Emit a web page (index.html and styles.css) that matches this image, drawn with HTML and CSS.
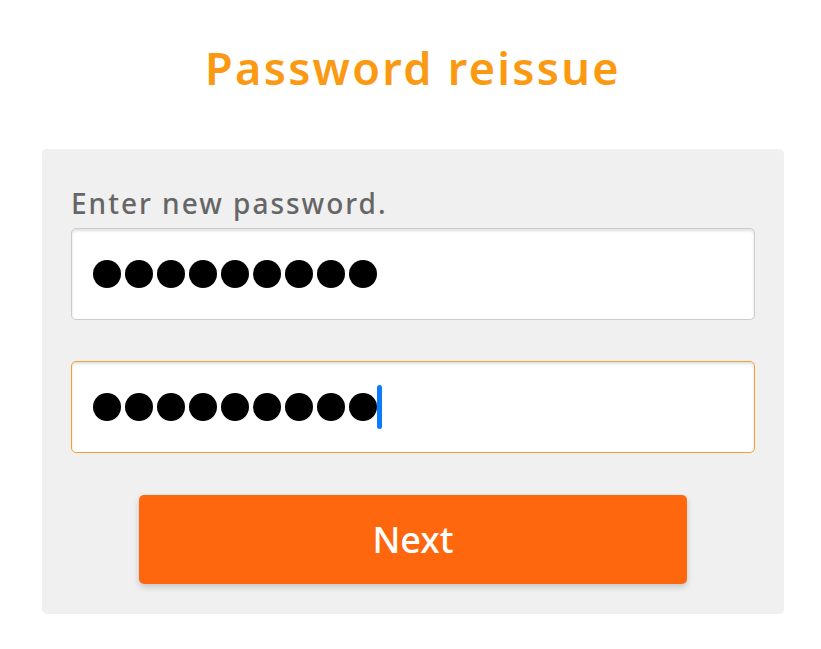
FILE: index.html
```html
<!DOCTYPE html>
<html>
<head>
<meta charset="utf-8">
<link rel="stylesheet" href="styles.css">
</head>
<body>
<h1 class="title">Password reissue</h1>
<div class="panel">
  <div class="label">Enter new password.</div>
  <div class="field">
    <div class="dots" aria-label="password"><span class="dot"></span><span class="dot"></span><span class="dot"></span><span class="dot"></span><span class="dot"></span><span class="dot"></span><span class="dot"></span><span class="dot"></span><span class="dot"></span></div>
  </div>
  <div class="field field-focus">
    <div class="dots" aria-label="password confirm"><span class="dot"></span><span class="dot"></span><span class="dot"></span><span class="dot"></span><span class="dot"></span><span class="dot"></span><span class="dot"></span><span class="dot"></span><span class="dot"></span><span class="caret"></span></div>
  </div>
  <div class="actions">
    <button class="btn">Next</button>
  </div>
</div>
</body>
</html>
```

FILE: styles.css
```css
html, body {
  margin: 0;
  padding: 0;
  background: #ffffff;
}
body {
  font-family: "Noto Sans", "Open Sans", sans-serif;
}
.title {
  margin: 0;
  padding-top: 38px;
  height: 149px;
  box-sizing: border-box;
  width: 826px;
  text-align: center;
  font-size: 45px;
  line-height: 60px;
  font-weight: 600;
  color: #fb9a12;
  letter-spacing: 2.3px;
}
.panel {
  margin-left: 42px;
  width: 742px;
  box-sizing: border-box;
  background: #f0f0f0;
  border-radius: 5px;
  padding: 29px 29px 30px 29px;
}
.label {
  font-size: 28px;
  line-height: 50px;
  font-weight: 500;
  color: #666666;
  letter-spacing: 2px;
}
.field {
  height: 92px;
  box-sizing: border-box;
  background: #ffffff;
  border: 1px solid #cccccc;
  border-radius: 5px;
  box-shadow: inset 0 2px 3px rgba(0,0,0,0.12);
  display: flex;
  align-items: center;
  padding-left: 21px;
  margin-bottom: 41px;
}
.field-focus {
  border-color: #f6a02a;
  margin-bottom: 42px;
}
.dots {
  display: flex;
  align-items: center;
  gap: 4px;
}
.dot {
  width: 28px;
  height: 28px;
  border-radius: 50%;
  background: #000000;
}
.caret {
  width: 5px;
  height: 44px;
  border-radius: 3px;
  background: #0a7cff;
  margin-left: -4px;
}
.actions {
  display: flex;
  justify-content: center;
}
.btn {
  width: 548px;
  height: 89px;
  border: none;
  border-radius: 5px;
  background: #ff670e;
  color: #ffffff;
  font-family: "Noto Sans", "Open Sans", sans-serif;
  font-size: 36px;
  font-weight: 500;
  box-shadow: 0 3px 6px rgba(0,0,0,0.18);
}
```
